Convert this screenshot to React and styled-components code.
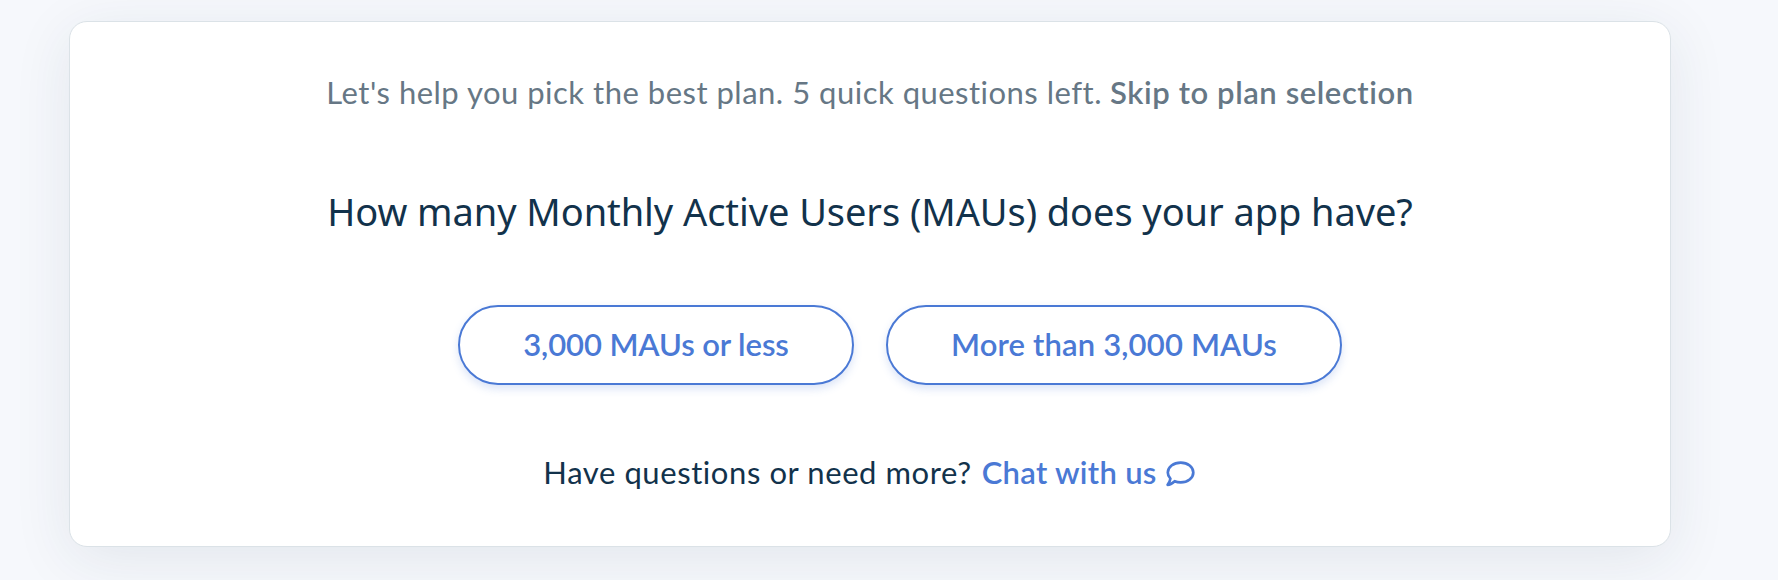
import React from "react";
import styled, { createGlobalStyle } from "styled-components";

const GlobalStyle = createGlobalStyle`
  * { box-sizing: border-box; }
  body {
    margin: 0;
    background: #f6f8fc;
    font-family: Lato, "Open Sans", sans-serif;
    overflow: hidden;
  }
`;

const Page = styled.main`
  height: 580px;
  padding: 21px 107px 33px 69px;
  overflow: hidden;
`;

const Card = styled.section`
  height: 526px;
  display: flex;
  flex-direction: column;
  align-items: center;
  padding-top: 50px;
  background: #fff;
  border: 1px solid #dbe2e7;
  border-radius: 18px;
  box-shadow: 0 12px 60px rgba(30, 60, 75, 0.09);
`;

const Intro = styled.p`
  display: flex;
  gap: 8px;
  margin: 0;
  color: #667785;
  font-size: 31px;
  line-height: 40px;
  letter-spacing: 0.48px;
  word-spacing: 0.1px;
  white-space: nowrap;
`;

const SkipLink = styled.a`
  font-weight: 600;
  letter-spacing: 0.56px;
`;

const Question = styled.h1`
  margin: 71px 0 0;
  color: #12324b;
  font-family: "Noto Sans", "Open Sans", sans-serif;
  font-size: 38px;
  font-weight: 400;
  line-height: 56px;
  letter-spacing: -0.07px;
  white-space: nowrap;
`;

const Choices = styled.div`
  display: flex;
  gap: 32px;
  margin: 66px 0 0 60px;
`;

const Choice = styled.button`
  width: ${(p) => p.$width}px;
  height: 80px;
  padding: 0 0 2px;
  border: 2px solid #4a79d5;
  border-radius: 40px;
  background: #fff;
  color: #4a79d5;
  font: 600 31px Lato, "Open Sans", sans-serif;
  letter-spacing: ${(p) => p.$tracking}px;
  white-space: nowrap;
  box-shadow: 0 4px 8px rgba(74, 121, 213, 0.2);
`;

const Help = styled.p`
  display: flex;
  align-items: center;
  gap: 10px;
  margin: 67px 2px 0 0;
  color: #12324b;
  font-size: 31px;
  line-height: 40px;
  letter-spacing: 0.58px;
  white-space: nowrap;
`;

const ChatLink = styled.a`
  display: flex;
  align-items: center;
  gap: 9px;
  color: #4a79d5;
  font-weight: 600;
  letter-spacing: 0.3px;
`;

const BubbleSvg = styled.svg`
  display: block;
  margin-top: 3px;
`;

const ChatIcon = () => (
  <BubbleSvg width="29" height="26" viewBox="0 0 29 26" fill="none" aria-hidden="true">
    <path
      d="M14.7 1.6C21.8 1.6 27.3 6 27.3 11.5S21.8 21.4 14.7 21.4C12.5 21.4 10.5 21 8.7 20.2C6.9 21.8 4.4 23.7 1.6 23.8C3.1 21.9 4.1 19.7 4.4 17.6C2.7 15.9 1.8 13.8 1.8 11.5C1.8 6 7.5 1.6 14.7 1.6Z"
      stroke="currentColor"
      strokeWidth="2.7"
      strokeLinejoin="round"
    />
  </BubbleSvg>
);

export default function App() {
  return (
    <>
      <GlobalStyle />
      <Page>
        <Card>
          <Intro>
            <span>Let's help you pick the best plan. 5 quick questions left.</span>
            <SkipLink>Skip to plan selection</SkipLink>
          </Intro>
          <Question>How many Monthly Active Users (MAUs) does your app have?</Question>
          <Choices>
            <Choice $width={396} $tracking={-0.1}>3,000 MAUs or less</Choice>
            <Choice $width={456} $tracking={0.15}>More than 3,000 MAUs</Choice>
          </Choices>
          <Help>
            <span>Have questions or need more?</span>
            <ChatLink>
              Chat with us
              <ChatIcon />
            </ChatLink>
          </Help>
        </Card>
      </Page>
    </>
  );
}
